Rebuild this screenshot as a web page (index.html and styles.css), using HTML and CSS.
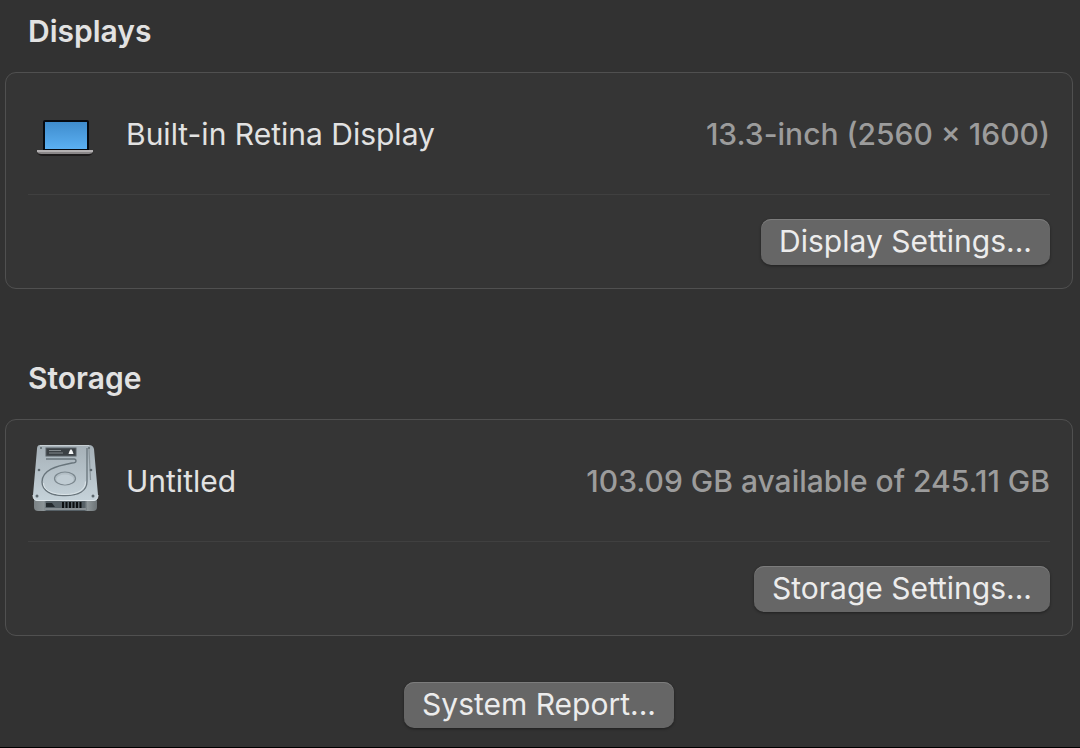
FILE: index.html
```html
<!DOCTYPE html>
<html lang="en">
<head>
    <meta charset="UTF-8">
    <meta name="viewport" content="width=device-width, initial-scale=1.0">
    <title>About</title>
    <link rel="stylesheet" href="styles.css">
</head>
<body>
    <main class="about">
        <section class="section">
            <h2>Displays</h2>
            <div class="card">
                <div class="row">
                    <svg class="icon" viewBox="0 0 74 74" aria-hidden="true">
                        <defs>
                            <linearGradient id="screen" x1="0" y1="0" x2="0" y2="1">
                                <stop offset="0" stop-color="#3f8ccd"/>
                                <stop offset="1" stop-color="#5bb0f2"/>
                            </linearGradient>
                        </defs>
                        <rect x="15" y="23" width="46" height="32" rx="2" fill="#060a10"/>
                        <rect x="17" y="25" width="42" height="27" fill="url(#screen)"/>
                        <path d="M9 55h56q-1 4-6 4H15q-5 0-6-4z" fill="#1d1b1b"/>
                        <path d="M9 53h56v2q-1 2-4 2H13q-3 0-4-2z" fill="#8a8788"/>
                        <rect x="9" y="53" width="56" height="2" fill="#b3b0b1"/>
                    </svg>
                    <span class="name">Built-in Retina Display</span>
                    <span class="value">13.3-inch (2560 × 1600)</span>
                </div>
                <div class="actions">
                    <button type="button">Display Settings...</button>
                </div>
            </div>
        </section>

        <section class="section">
            <h2>Storage</h2>
            <div class="card">
                <div class="row">
                    <svg class="icon" viewBox="0 3 74 74" aria-hidden="true">
                        <defs>
                            <linearGradient id="lid" x1="0" y1="0" x2="0" y2="1">
                                <stop offset="0" stop-color="#a5b0b7"/>
                                <stop offset="1" stop-color="#c6d3da"/>
                            </linearGradient>
                            <linearGradient id="base" x1="0" y1="0" x2="1" y2="0">
                                <stop offset="0" stop-color="#7c8386"/>
                                <stop offset="0.160" stop-color="#8d9598"/>
                                <stop offset="0.200" stop-color="#566066"/>
                                <stop offset="0.800" stop-color="#566066"/>
                                <stop offset="0.850" stop-color="#8d9598"/>
                                <stop offset="1" stop-color="#6d7477"/>
                            </linearGradient>
                        </defs>
                        <!-- base with the vents -->
                        <path d="M6 56h63v10q0 4-4 4H10q-4 0-4-4z" fill="url(#base)"/>
                        <path d="M17 67h41v2H17z" fill="#899094"/>
                        <path d="M35 61v6M38.500 61v6M42 61v6M45.500 61v6M49 61v6M52.500 61v6" stroke="#0d1012" stroke-width="2"/>
                        <path d="M18 62h6l3 4h-9z" fill="#23292d"/>
                        <!-- lid -->
                        <path d="M12 4h49q4 0 5 4l4 46q0 6-5 6H10q-5 0-5-6L9 8q0-4 3-4z" fill="url(#lid)"/>
                        <path d="M5 54q0 5.500 5 5.500h55q5 0 5-5.500" fill="none" stroke="#e0e8ec" stroke-width="1"/>
                        <path d="M12 4.500h49" stroke="#c7cfd3"/>
                        <!-- label -->
                        <rect x="18" y="7" width="30" height="8" fill="#3b4145" stroke="#5a6268"/>
                        <path d="M21 9.500h12M21 12h14" stroke="#82898d" stroke-width="1"/>
                        <path d="M40.500 13l1-3 1.500-2 1.500 2 1 3z" fill="#f3f5f6"/>
                        <!-- platter outline -->
                        <path d="M18 18h28q2 0 2 2t-4 2C28 25 14 29 14 41c0 9 10 14 23 13.500 14 0 22-5 22-14V7" fill="none" stroke="#68747b" stroke-width="1.300"/>
                        <path d="M15.500 42c0 8 10 11.500 21.500 11.500 13 0 20.500-5 20.500-13" fill="none" stroke="#dce5e9" stroke-width="1"/>
                        <path d="M61 8l1.500 31" stroke="#8b969c" stroke-width="1.200"/>
                        <ellipse cx="37" cy="37.500" rx="10.500" ry="6.500" fill="#b2bec5" stroke="#7b878e" stroke-width="1.200"/>
                        <ellipse cx="37" cy="38.500" rx="8.500" ry="5" fill="#c0ccd3"/>
                        <!-- screws -->
                        <g fill="#5d686e">
                            <circle cx="13" cy="7" r="1"/>
                            <circle cx="61" cy="7" r="1"/>
                            <circle cx="11" cy="29" r="1.300"/>
                            <circle cx="63" cy="29" r="1.300"/>
                            <circle cx="9" cy="55" r="1.500"/>
                            <circle cx="65" cy="55" r="1.500"/>
                        </g>
                    </svg>
                    <span class="name">Untitled</span>
                    <span class="value">103.09 GB available of 245.11 GB</span>
                </div>
                <div class="actions">
                    <button type="button">Storage Settings...</button>
                </div>
            </div>
        </section>

        <div class="report">
            <button type="button">System Report...</button>
        </div>
    </main>
</body>
</html>
```

FILE: styles.css
```css
* {
    box-sizing: border-box;
}

body {
    margin: 0;
    background-color: #323232;
    color: #e2e2e2;
    font-family: Inter, 'Liberation Sans', sans-serif;
    font-size: 30px;
    line-height: 36px;
}

.about {
    min-height: 100vh;
    padding: 13px 7px 16px 5px;
    border-bottom: 1px solid #000;
}

.section {
    margin-bottom: 71px;
}

.section:nth-of-type(2) {
    margin-bottom: 46px;
}

h2 {
    margin: 0 0 23px;
    padding-left: 23px;
    font-size: 30px;
    line-height: 36px;
    font-weight: 600;
}

.card {
    padding: 0 22px;
    border: 1px solid #505050;
    border-radius: 11px;
    background-color: #353535;
}

.row {
    display: flex;
    align-items: center;
    gap: 24px;
    min-height: 122px;
    border-bottom: 1px solid #404040;
}

.icon {
    flex: none;
    width: 74px;
    height: 74px;
}

.value {
    margin-left: auto;
    color: #9c9c9c;
    font-weight: 500;
}

.actions {
    display: flex;
    justify-content: flex-end;
    padding: 24px 0 23px;
}

button {
    padding: 4px 18px 6px;
    border: 0;
    border-radius: 10px;
    background-color: #666;
    box-shadow: inset 0 1px 0 #7c7c7c, 0 1px 3px rgba(0, 0, 0, 0.4);
    color: #ececec;
    font: inherit;
}

.report {
    display: flex;
    justify-content: center;
}
```
